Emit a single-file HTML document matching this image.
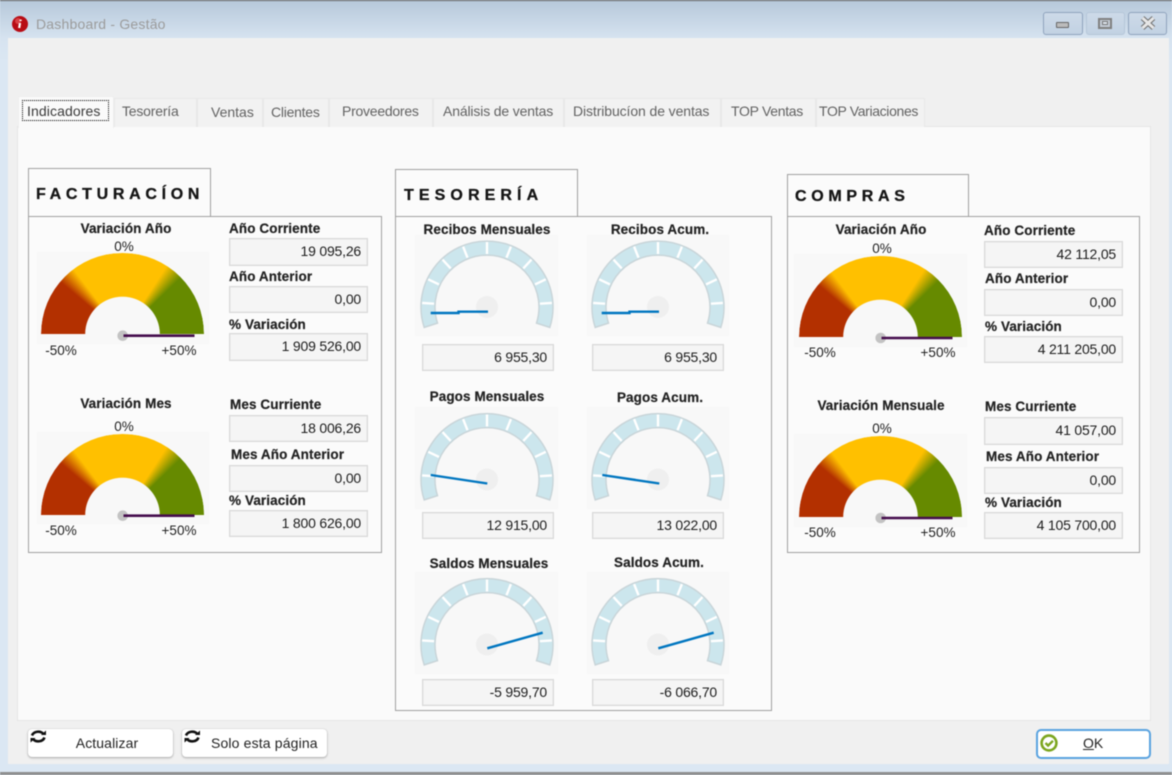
<!DOCTYPE html>
<html><head><meta charset="utf-8"><title>Dashboard - Gestão</title>
<style>
html,body{margin:0;padding:0;width:1172px;height:775px;overflow:hidden;background:#dbe7f3}
#w{position:absolute;left:0;top:0;width:1172px;height:775px;overflow:hidden;filter:blur(.4px);font-family:"Liberation Sans",sans-serif;font-size:14px;color:#222;
background:linear-gradient(#b6c8da 0,#d6e3f0 38px,#dbe7f3 60px)}
#w div{position:absolute;box-sizing:border-box}
.t{white-space:nowrap;line-height:16px;height:16px}
.c{transform:translateX(-50%)}
.b{font-weight:bold;font-size:13.5px;color:#222;letter-spacing:.1px;-webkit-text-stroke:.2px #222;margin-top:1px}
.n{font-size:13.5px;color:#222;margin-top:1px}
.f{background:#f5f5f5;border:1px solid #d9d9d9;box-shadow:inset 0 0 0 .5px #e4e4e4;text-align:right;padding-right:6px;font-size:14px;color:#1c1c1c;line-height:25px;letter-spacing:-.2px;white-space:nowrap}
.tab{background:#f2f2f2;border:1px solid #e8e8e8;border-bottom:none;top:98px;height:29px}
.tl{top:103px;color:#626262;font-size:14px}
.p{border:1px solid #a0a0a0;background:#fbfbfb}
.h{border:1px solid #a0a0a0;background:#fbfbfb;font-weight:bold;font-size:16px;color:#151515;white-space:nowrap;line-height:16px;-webkit-text-stroke:.3px #151515}
.g{width:163px;height:81px;border-radius:81px 81px 0 0;
background:conic-gradient(from 270deg at 81.5px 81px,#b33000 0 40deg,#ffc000 53deg 123deg,#668a00 136deg 180deg,#668a00 360deg);
-webkit-mask:radial-gradient(circle at 81.5px 81px,transparent 37px,#000 37.6px);mask:radial-gradient(circle at 81.5px 81px,transparent 37px,#000 37.6px)}
.gb{background:#f8f8f8}
.btn{background:#fff;border-radius:4px;box-shadow:0 1px 2px rgba(0,0,0,.28),0 0 1px rgba(0,0,0,.25)}
.wc{top:12px;height:23px;border:1px solid #8fa3bd;border-radius:3px;background:linear-gradient(#cddae8,#c2d2e3)}
</style></head><body><div id="w">
<div style="left:0;top:0;width:1172px;height:1px;background:#5a5a5a"></div>
<div style="left:0;top:772px;width:1172px;height:3px;background:#8f8f8f"></div>
<div style="left:8px;top:38px;width:1161px;height:726px;background:#f0f0f0"></div>

<svg style="position:absolute;left:12px;top:16px" width="16" height="16" viewBox="0 0 16 16"><circle cx="8" cy="8" r="8" fill="#b80c14"/><circle cx="6" cy="5" r="3" fill="#e66" opacity=".6"/><path d="M8 7l-.8 5M8.6 3.6v1.4" stroke="#fff" stroke-width="2.2" fill="none"/></svg>
<div class="t" style="left:36px;top:16px;color:#9b9b9b;font-size:14px;letter-spacing:.2px">Dashboard - Gestão</div>

<div class="wc" style="left:1043px;width:40px"></div>
<div style="left:1056px;top:22px;width:13px;height:6px;background:#bbb;border:1px solid #666;border-radius:1px"></div>
<div class="wc" style="left:1086px;width:39px;border-color:#b5c6d8"></div>
<div style="left:1098px;top:18px;width:14px;height:11px;background:#c4ccd6;border:2px solid #808080"></div>
<div style="left:1102px;top:21px;width:6px;height:4px;background:#dfe6ee;border:1px solid #777"></div>
<div class="wc" style="left:1128px;width:39px"></div>
<svg style="position:absolute;left:1140px;top:16px" width="16" height="14" viewBox="0 0 16 14"><path d="M2.5 2l11 10M13.5 2l-11 10" stroke="#6e6e6e" stroke-width="5"/><path d="M2.5 2l11 10M13.5 2l-11 10" stroke="#e6e6e6" stroke-width="3"/></svg>

<!-- tabs -->
<div style="left:17px;top:126px;width:1134px;height:595px;background:#fafafa;border:1px solid #e6e6e6"></div>
<div class="tab" style="left:114px;width:83px"></div>
<div class="tab" style="left:197px;width:66px"></div>
<div class="tab" style="left:263px;width:66px"></div>
<div class="tab" style="left:329px;width:104px"></div>
<div class="tab" style="left:433px;width:131px"></div>
<div class="tab" style="left:564px;width:157px"></div>
<div class="tab" style="left:721px;width:95px"></div>
<div class="tab" style="left:816px;width:109px"></div>
<div style="left:18px;top:96px;width:96px;height:32px;background:#fafafa;border:1px solid #eee;border-bottom:none"></div>
<div style="left:22px;top:100px;width:87px;height:21px;border:1px dotted #000"></div>
<div class="t" style="left:27px;top:103px;color:#3a3a3a;font-size:14px;letter-spacing:.1px">Indicadores</div>
<div class="t tl" style="left:122px;letter-spacing:-.2px">Tesorería</div>
<div class="t tl" style="left:211px;top:104px">Ventas</div>
<div class="t tl" style="left:271px;top:104px;letter-spacing:-.25px">Clientes</div>
<div class="t tl" style="left:342px;letter-spacing:-.25px">Proveedores</div>
<div class="t tl" style="left:443px;letter-spacing:-.15px">Análisis de ventas</div>
<div class="t tl" style="left:573px;letter-spacing:-.1px">Distribucíon de ventas</div>
<div class="t tl" style="left:731px;letter-spacing:-.3px">TOP Ventas</div>
<div class="t tl" style="left:819px;letter-spacing:-.35px">TOP Variaciones</div>

<!-- panels -->
<div class="h" style="left:28px;top:168px;width:183px;height:49px;padding:18px 0 0 7px;letter-spacing:4.7px">FACTURACÍON</div>
<div class="p" style="left:28px;top:216px;width:354px;height:337px"></div>
<div class="h" style="left:395px;top:169px;width:183px;height:48px;padding:18px 0 0 8px;letter-spacing:5.1px">TESORERÍA</div>
<div class="p" style="left:395px;top:216px;width:377px;height:495px"></div>
<div class="h" style="left:787px;top:174px;width:182px;height:43px;padding:14px 0 0 7px;letter-spacing:4.7px">COMPRAS</div>
<div class="p" style="left:787px;top:216px;width:353px;height:337px"></div>

<!-- Facturacion -->
<div class="t b c" style="left:126px;top:220px">Variación Año</div>
<div class="t n c" style="left:124px;top:238px">0%</div>
<div class="gb" style="left:37px;top:252px;width:172px;height:92px"></div>
<div class="g" style="left:41px;top:253px"></div>
<div class="t n c" style="left:61px;top:342px">-50%</div>
<div class="t n c" style="left:179px;top:342px">+50%</div>
<div class="t b" style="left:229px;top:220px">Año Corriente</div>
<div class="f" style="left:229px;top:238px;width:139px;height:28px">19 095,26</div>
<div class="t b" style="left:229px;top:268px">Año Anterior</div>
<div class="f" style="left:229px;top:286px;width:139px;height:27px">0,00</div>
<div class="t b" style="left:229px;top:316px">% Variación</div>
<div class="f" style="left:229px;top:333px;width:139px;height:28px">1 909 526,00</div>

<div class="t b c" style="left:126px;top:395px">Variación Mes</div>
<div class="t n c" style="left:124px;top:418px">0%</div>
<div class="gb" style="left:37px;top:432px;width:172px;height:92px"></div>
<div class="g" style="left:41px;top:433.5px"></div>
<div class="t n c" style="left:61px;top:522px">-50%</div>
<div class="t n c" style="left:179px;top:522px">+50%</div>
<div class="t b" style="left:230px;top:396px">Mes Curriente</div>
<div class="f" style="left:229px;top:415px;width:139px;height:27px">18 006,26</div>
<div class="t b" style="left:231px;top:446px">Mes Año Anterior</div>
<div class="f" style="left:229px;top:465px;width:139px;height:27px">0,00</div>
<div class="t b" style="left:229px;top:492px">% Variación</div>
<div class="f" style="left:229px;top:510px;width:139px;height:27px">1 800 626,00</div>

<!-- Compras -->
<div class="t b c" style="left:881px;top:221px">Variación Año</div>
<div class="t n c" style="left:882px;top:240px">0%</div>
<div class="gb" style="left:794px;top:254px;width:173px;height:93px"></div>
<div class="g" style="left:799px;top:256px"></div>
<div class="t n c" style="left:820px;top:344px">-50%</div>
<div class="t n c" style="left:938px;top:344px">+50%</div>
<div class="t b" style="left:984px;top:222px">Año Corriente</div>
<div class="f" style="left:984px;top:241px;width:139px;height:27px">42 112,05</div>
<div class="t b" style="left:985px;top:270px">Año Anterior</div>
<div class="f" style="left:984px;top:289px;width:139px;height:27px">0,00</div>
<div class="t b" style="left:985px;top:318px">% Variación</div>
<div class="f" style="left:984px;top:336px;width:139px;height:27px">4 211 205,00</div>

<div class="t b c" style="left:881px;top:397px">Variación Mensuale</div>
<div class="t n c" style="left:882px;top:420px">0%</div>
<div class="gb" style="left:794px;top:434px;width:173px;height:93px"></div>
<div class="g" style="left:799px;top:436px"></div>
<div class="t n c" style="left:820px;top:524px">-50%</div>
<div class="t n c" style="left:938px;top:524px">+50%</div>
<div class="t b" style="left:985px;top:398px">Mes Curriente</div>
<div class="f" style="left:984px;top:417px;width:139px;height:28px">41 057,00</div>
<div class="t b" style="left:986px;top:448px">Mes Año Anterior</div>
<div class="f" style="left:984px;top:467px;width:139px;height:27px">0,00</div>
<div class="t b" style="left:985px;top:494px">% Variación</div>
<div class="f" style="left:984px;top:512px;width:139px;height:27px">4 105 700,00</div>

<!-- Tesoreria -->
<div class="gb" style="left:415px;top:235px;width:143px;height:101px"></div>
<div class="gb" style="left:587px;top:235px;width:142px;height:101px"></div>
<div class="gb" style="left:415px;top:407px;width:143px;height:102px"></div>
<div class="gb" style="left:587px;top:407px;width:142px;height:102px"></div>
<div class="gb" style="left:415px;top:572px;width:143px;height:102px"></div>
<div class="gb" style="left:587px;top:572px;width:142px;height:102px"></div>
<div class="t b c" style="left:487px;top:221px">Recibos Mensuales</div>
<div class="t b c" style="left:660px;top:221px">Recibos Acum.</div>
<div class="t b c" style="left:487px;top:388px">Pagos Mensuales</div>
<div class="t b c" style="left:660px;top:389px">Pagos Acum.</div>
<div class="t b c" style="left:489px;top:555px">Saldos Mensuales</div>
<div class="t b c" style="left:659px;top:554px">Saldos Acum.</div>
<div class="f" style="left:422px;top:344px;width:132px;height:27px">6 955,30</div>
<div class="f" style="left:592px;top:344px;width:132px;height:27px">6 955,30</div>
<div class="f" style="left:422px;top:512px;width:132px;height:27px">12 915,00</div>
<div class="f" style="left:592px;top:512px;width:132px;height:27px">13 022,00</div>
<div class="f" style="left:422px;top:679px;width:132px;height:27px">-5 959,70</div>
<div class="f" style="left:592px;top:679px;width:132px;height:27px">-6 066,70</div>

<svg style="position:absolute;left:0;top:0" width="1172" height="775" viewBox="0 0 1172 775">
<defs>
<g id="bg">
<circle r="11" fill="#efefef"/>
<path d="M-62.8 20.4A66 66 0 1 1 62.8 20.4L49.5 16.1A52 52 0 1 0-49.5 16.1Z" fill="#cce6ed" stroke="#c9d5d9" stroke-width="1.5"/>
<path d="M0-53V-65M19.5-49.3L23.9-60.4M36.3-38.6L44.5-47.4M48-22.6L58.8-27.7M52.9-3.3L64.9-4.1M-19.5-49.3L-23.9-60.4M-36.3-38.6L-44.5-47.4M-48-22.6L-58.8-27.7M-52.9-3.3L-64.9-4.1" stroke="#fff" stroke-width="2.4"/>
</g>
<g id="rf" fill="none" stroke="#111" stroke-width="2.6">
<path d="M2 6.5A6.5 5.5 0 0 1 13.5 5"/><path d="M14.5 8.5A6.5 5.5 0 0 1 3 10"/>
<path d="M11 6H16V1.5Z" stroke="none" fill="#111"/><path d="M5.5 9H.5V13.5Z" stroke="none" fill="#111"/>
</g>
</defs>
<use href="#bg" x="487" y="307"/><use href="#bg" x="658" y="307"/>
<use href="#bg" x="487" y="479.5"/><use href="#bg" x="658" y="479.5"/>
<use href="#bg" x="487" y="644.5"/><use href="#bg" x="658" y="644.5"/>
<g fill="none" stroke="#0076c0" stroke-width="2.4">
<path d="M488 311.7H458.5V313H430.7"/><path d="M659 311.7H629.5V313H601.7"/>
<path d="M487.3 483.5L430.7 475"/><path d="M659.3 483.5L602.3 475"/>
<path d="M487.3 648.3L542.7 632.7"/><path d="M658.3 648.3L713.7 632.7"/>
</g>
<g fill="#c3c3c3"><circle cx="122.7" cy="335.7" r="5.3"/><circle cx="122.7" cy="515.7" r="5.3"/><circle cx="880.7" cy="338" r="5.3"/><circle cx="880.7" cy="518" r="5.3"/></g>
<g stroke="#450c4c" stroke-width="2.6"><path d="M123.5 335.7H194.5"/><path d="M123.5 515.7H194.5"/><path d="M881.5 338H952.5"/><path d="M881.5 518H952.5"/></g>
</svg>

<!-- buttons -->
<div class="btn" style="left:28px;top:729px;width:145px;height:28px"></div>
<div class="t c" style="left:107px;top:735px;font-size:14px;color:#222;letter-spacing:.1px">Actualizar</div>
<div class="btn" style="left:182px;top:729px;width:145px;height:28px"></div>
<div class="t" style="left:211px;top:735px;font-size:14px;color:#222;letter-spacing:.15px">Solo esta página</div>
<svg style="position:absolute;left:30px;top:729px" width="17" height="16" viewBox="0 0 17 16"><use href="#rf"/></svg>
<svg style="position:absolute;left:184px;top:729px" width="17" height="16" viewBox="0 0 17 16"><use href="#rf"/></svg>
<div style="left:1036px;top:728.5px;width:115px;height:30px;background:#fff;border:2px solid #5aa3e0;border-radius:5px"></div>
<svg style="position:absolute;left:1040px;top:734px" width="18" height="18" viewBox="0 0 18 18"><circle cx="9" cy="9" r="7.4" fill="#fff" stroke="#7ca61f" stroke-width="2.6"/><path d="M5.5 9l2.6 2.6L13 6.8" fill="none" stroke="#7ca61f" stroke-width="2.4"/></svg>
<div class="t" style="left:1083px;top:735px;font-size:14px;color:#222"><span style="text-decoration:underline">O</span>K</div>
</div></body></html>
